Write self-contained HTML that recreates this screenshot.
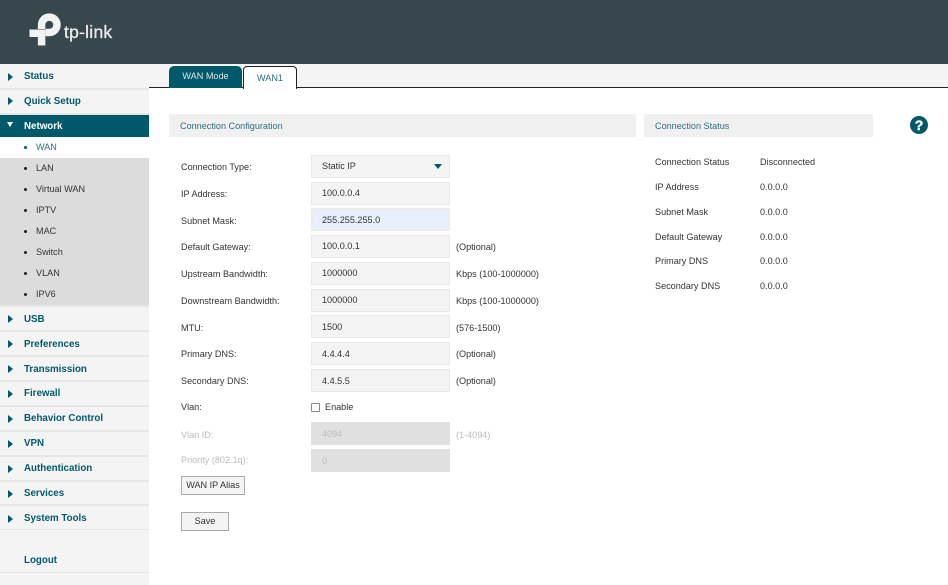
<!DOCTYPE html>
<html><head><meta charset="utf-8"><style>
*{box-sizing:border-box}
html,body{margin:0;padding:0;width:948px;height:585px;overflow:hidden;background:#fff;font-family:"Liberation Sans",sans-serif;font-size:9.1px;color:#333}
.a{position:absolute;white-space:nowrap}
.t{position:absolute;white-space:nowrap;line-height:12px}
.m{left:24px;font-weight:bold;font-size:9.75px;color:#00596b}
.sep{position:absolute;left:0;width:149px;height:2px;background:#e6e6e6}
.ar{position:absolute;left:8px;width:0;height:0;border-left:5px solid #00596b;border-top:4px solid transparent;border-bottom:4px solid transparent}
.s{left:36px;color:#333}
.d{position:absolute;left:24px;width:3px;height:3px;border-radius:50%;background:#222}
.i{position:absolute;left:311px;width:139px;height:23px;background:#f4f4f4;border:1px solid #e8e8e8;padding-left:10px;line-height:21px;color:#333}
.l{left:181px}
.h{position:absolute;height:23px;background:#f0f0f0;top:114px;color:#2b6f80;padding-left:11px;line-height:25px}
.btn{position:absolute;left:181px;background:#f4f4f4;border:1px solid #aaa;text-align:center;color:#333}
</style></head><body>
<div class="a" style="left:0;top:0;width:948px;height:64px;background:#38464e"></div>
<svg class="a" style="left:0;top:0" width="130" height="64" fill="none" stroke="#f2f2f2" stroke-width="7.5"><path d="M41.6 45.5V33.2H29.5"/><path d="M41.6 29V24.8A7.7 7.7 0 1 1 49.3 32.5H45.5"/></svg>
<div class="t" style="left:64px;top:23px;font-size:17.5px;line-height:18px;letter-spacing:.25px;color:#eaeaea;-webkit-text-stroke:.35px #eaeaea">tp-link</div>

<div class="a" style="left:0;top:64px;width:149px;height:521px;background:#f4f4f4"></div>
<div class="sep" style="top:88px"></div>
<div class="sep" style="top:113px"></div>
<div class="a" style="left:0;top:115px;width:149px;height:22px;background:#00596b"></div>
<div class="a" style="left:0;top:137px;width:149px;height:21px;background:#fff"></div>
<div class="a" style="left:0;top:158px;width:149px;height:147px;background:#dcdcdc"></div>
<div class="sep" style="top:305px"></div>
<div class="sep" style="top:330px"></div>
<div class="sep" style="top:355px"></div>
<div class="sep" style="top:380px"></div>
<div class="sep" style="top:405px"></div>
<div class="sep" style="top:430px"></div>
<div class="sep" style="top:455px"></div>
<div class="sep" style="top:480px"></div>
<div class="sep" style="top:504px"></div>
<div class="a" style="left:0;top:529px;width:149px;height:1px;background:#e6e6e6"></div>
<div class="a" style="left:0;top:572px;width:149px;height:1px;background:#e6e6e6"></div>

<div class="ar" style="top:73px"></div><div class="t m" style="top:71px">Status</div>
<div class="ar" style="top:97px"></div><div class="t m" style="top:96px">Quick Setup</div>
<div class="a" style="left:7px;top:122px;width:0;height:0;border-top:5px solid #fff;border-left:3.5px solid transparent;border-right:3.5px solid transparent"></div><div class="t m" style="top:121px;color:#fff">Network</div>

<div class="d" style="top:146px;background:#00596b"></div><div class="t s" style="top:141px;color:#2b6f80">WAN</div>
<div class="d" style="top:167px"></div><div class="t s" style="top:162px">LAN</div>
<div class="d" style="top:188px"></div><div class="t s" style="top:183px">Virtual WAN</div>
<div class="d" style="top:209px"></div><div class="t s" style="top:204px">IPTV</div>
<div class="d" style="top:230px"></div><div class="t s" style="top:225px">MAC</div>
<div class="d" style="top:251px"></div><div class="t s" style="top:246px">Switch</div>
<div class="d" style="top:272px"></div><div class="t s" style="top:267px">VLAN</div>
<div class="d" style="top:293px"></div><div class="t s" style="top:288px">IPV6</div>

<div class="ar" style="top:315px"></div><div class="t m" style="top:314px">USB</div>
<div class="ar" style="top:340px"></div><div class="t m" style="top:339px">Preferences</div>
<div class="ar" style="top:365px"></div><div class="t m" style="top:364px">Transmission</div>
<div class="ar" style="top:390px"></div><div class="t m" style="top:388px">Firewall</div>
<div class="ar" style="top:415px"></div><div class="t m" style="top:413px">Behavior Control</div>
<div class="ar" style="top:440px"></div><div class="t m" style="top:438px">VPN</div>
<div class="ar" style="top:465px"></div><div class="t m" style="top:463px">Authentication</div>
<div class="ar" style="top:490px"></div><div class="t m" style="top:488px">Services</div>
<div class="ar" style="top:515px"></div><div class="t m" style="top:513px">System Tools</div>
<div class="t m" style="top:555px">Logout</div>

<div class="a" style="left:149px;top:64px;width:799px;height:23px;background:#f4f4f4"></div>
<div class="a" style="left:149px;top:87px;width:799px;height:1px;background:#222"></div>
<div class="a" style="left:169px;top:66px;width:73px;height:22px;background:#00596b;border-radius:5px 5px 0 0;color:#e4e4e4;text-align:center;line-height:21px">WAN Mode</div>
<div class="a" style="left:243px;top:66px;width:54px;height:23px;background:#fff;border:1px solid #222;border-bottom:0;border-radius:4px 4px 0 0;color:#2b6f80;text-align:center;line-height:22px">WAN1</div>

<div class="h" style="left:169px;width:467px">Connection Configuration</div>
<div class="h" style="left:644px;width:229px">Connection Status</div>
<svg class="a" style="left:910px;top:116px" width="18" height="18"><circle cx="9" cy="9" r="9" fill="#00596b"/><text x="9" y="14" text-anchor="middle" font-family="Liberation Sans" font-weight="bold" font-size="14" fill="#fff" stroke="#fff" stroke-width=".5">?</text></svg>

<div class="t l" style="top:161px">Connection Type:</div>
<div class="i" style="top:155px">Static IP</div>
<div class="a" style="left:434px;top:164px;width:0;height:0;border-top:5px solid #00596b;border-left:4.5px solid transparent;border-right:4.5px solid transparent"></div>
<div class="t l" style="top:188px">IP Address:</div>
<div class="i" style="top:182px">100.0.0.4</div>
<div class="t l" style="top:215px">Subnet Mask:</div>
<div class="i" style="top:208px;background:#e8f0fe;border:2px solid #ececec;padding-left:9px;line-height:21px">255.255.255.0</div>
<div class="t l" style="top:241px">Default Gateway:</div>
<div class="i" style="top:235px">100.0.0.1</div>
<div class="t" style="left:456px;top:241px">(Optional)</div>
<div class="t l" style="top:268px">Upstream Bandwidth:</div>
<div class="i" style="top:262px">1000000</div>
<div class="t" style="left:456px;top:268px">Kbps (100-1000000)</div>
<div class="t l" style="top:295px">Downstream Bandwidth:</div>
<div class="i" style="top:289px">1000000</div>
<div class="t" style="left:456px;top:295px">Kbps (100-1000000)</div>
<div class="t l" style="top:322px">MTU:</div>
<div class="i" style="top:315px;line-height:23px">1500</div>
<div class="t" style="left:456px;top:322px">(576-1500)</div>
<div class="t l" style="top:348px">Primary DNS:</div>
<div class="i" style="top:342px;line-height:23px">4.4.4.4</div>
<div class="t" style="left:456px;top:348px">(Optional)</div>
<div class="t l" style="top:375px">Secondary DNS:</div>
<div class="i" style="top:369px;line-height:23px">4.4.5.5</div>
<div class="t" style="left:456px;top:375px">(Optional)</div>
<div class="t l" style="top:401px">Vlan:</div>
<div class="a" style="left:311px;top:403px;width:9px;height:9px;border:1px solid #888;border-radius:1px;background:#fff"></div>
<div class="t" style="left:325px;top:401px">Enable</div>
<div class="t l" style="top:429px;color:#bbb">Vlan ID:</div>
<div class="i" style="top:422px;background:#e0e0e0;border:0;padding-left:11px;line-height:24px;color:#bbb">4094</div>
<div class="t" style="left:456px;top:429px;color:#bbb">(1-4094)</div>
<div class="t l" style="top:454px;color:#bbb">Priority (802.1q):</div>
<div class="i" style="top:449px;background:#e0e0e0;border:0;padding-left:11px;line-height:24px;color:#bbb">0</div>
<div class="btn" style="top:476px;width:64px;height:19px;line-height:16px">WAN IP Alias</div>
<div class="btn" style="top:512px;width:48px;height:19px;line-height:16px">Save</div>

<div class="t" style="left:655px;top:156px">Connection Status</div><div class="t" style="left:760px;top:156px">Disconnected</div>
<div class="t" style="left:655px;top:181px">IP Address</div><div class="t" style="left:760px;top:181px">0.0.0.0</div>
<div class="t" style="left:655px;top:206px">Subnet Mask</div><div class="t" style="left:760px;top:206px">0.0.0.0</div>
<div class="t" style="left:655px;top:231px">Default Gateway</div><div class="t" style="left:760px;top:231px">0.0.0.0</div>
<div class="t" style="left:655px;top:255px">Primary DNS</div><div class="t" style="left:760px;top:255px">0.0.0.0</div>
<div class="t" style="left:655px;top:280px">Secondary DNS</div><div class="t" style="left:760px;top:280px">0.0.0.0</div>
</body></html>
